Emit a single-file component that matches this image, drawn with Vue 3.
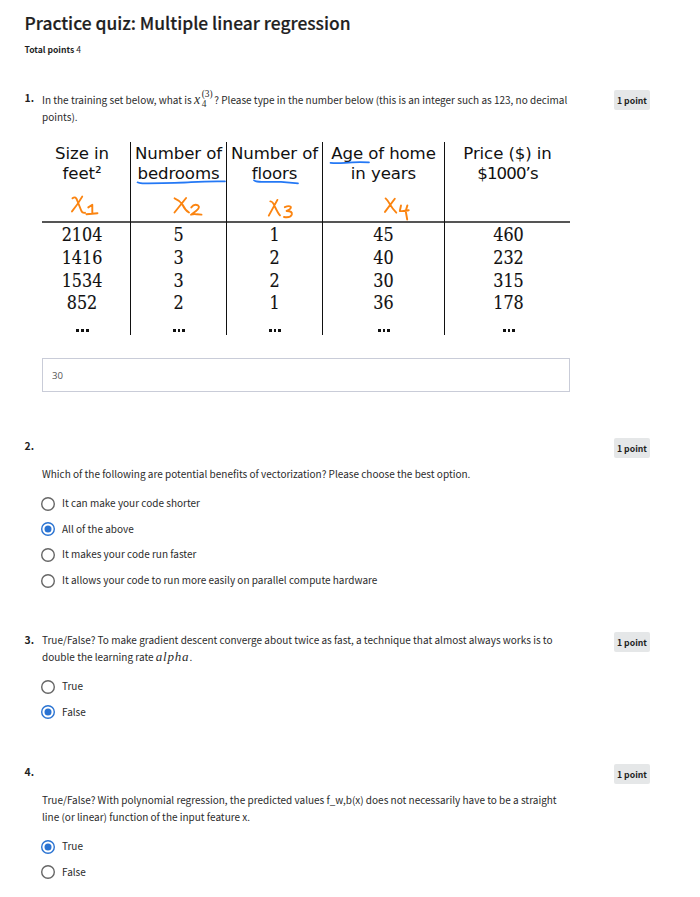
<script setup>
const columns = [
  { head: ['Size in', 'feet²'], rows: ['2104', '1416', '1534', '852'], w: 89 },
  { head: ['Number of', 'bedrooms'], rows: ['5', '3', '3', '2'], w: 96 },
  { head: ['Number of', 'floors'], rows: ['1', '2', '2', '1'], w: 96 },
  { head: ['Age of home', 'in years'], rows: ['45', '40', '30', '36'], w: 122 },
  { head: ['Price ($) in', "$1000’s"], rows: ['460', '232', '315', '178'], w: 125 },
]
const choices = [
  {
    id: 2,
    lines: ['Which of the following are potential benefits of vectorization? Please choose the best option.'],
    options: [
      'It can make your code shorter',
      'All of the above',
      'It makes your code run faster',
      'It allows your code to run more easily on parallel compute hardware',
    ],
    selected: 1,
  },
  {
    id: 3,
    lines: [
      'True/False? To make gradient descent converge about twice as fast, a technique that almost always works is to',
      'double the learning rate ',
    ],
    math: 'alpha',
    options: ['True', 'False'],
    selected: 1,
  },
  {
    id: 4,
    lines: [
      'True/False? With polynomial regression, the predicted values f_w,b(x) does not necessarily have to be a straight',
      'line (or linear) function of the input feature x.',
    ],
    options: ['True', 'False'],
    selected: 0,
  },
]
</script>

<template>
  <main class="page">
    <h1>Practice quiz: Multiple linear regression</h1>
    <p class="total"><b>Total points</b> 4</p>

    <section class="question q1">
      <div class="num">1.</div>
      <div class="body">
        <p class="prompt">
          <span class="line">In the training set below, what is <span class="math x">x<span class="scripts"><span>(3)</span><span>4</span></span></span>? Please type in the number below (this is an integer such as 123, no decimal</span>
          <span class="line">points).</span>
        </p>
        <div class="figure">
          <div v-for="(c, i) in columns" :key="i" class="col" :class="'c' + i" :style="{ width: c.w + 'px' }">
            <div class="head">
              <span v-for="h in c.head" :key="h" :class="{ tight: h.startsWith('$') }">{{ h }}</span>
            </div>
            <div v-for="r in c.rows" :key="r" class="cell">{{ r }}</div>
            <div class="dots"><i></i><i></i><i></i></div>
          </div>
          <svg class="ink" viewBox="42 142 528 194" width="528" height="194" fill="none" stroke-linecap="round" stroke-linejoin="round">
            <g stroke="#2478f5" stroke-width="1.7">
              <path d="M137.5 182.3Q140 183.7 148 183.4Q180 183 191 182.2Q210 181 225 181.4" />
              <path d="M254 180.3Q255 181.8 262 181.8L281 181.9Q289 182.6 298 183.4" />
              <path d="M330.5 162.9Q337 163.3 345 162.8Q357 161.8 369 162.4" />
            </g>
            <g stroke="#fb8410" stroke-width="1.9">
              <path d="M72.5 198.3Q76 195.5 77.4 201L81 210Q82 213.2 85 212.8M82.2 196.6Q78 204 72 211.4M88.3 207.4L92.3 204.8V213.6M86.5 214.2L97.5 213.2" />
              <path d="M174.6 198.3Q179 200 182.4 204.5Q185 210 189 212.5M186.1 198L174.5 212.5M191.3 207.4Q194.2 203.5 198 205.4Q200.6 207.3 196 210.9L191 214.7Q194 213.6 196.8 214.3L201.5 214.6" />
              <path d="M270.3 201.4Q272.5 200.9 275 206.9Q278 213.3 280 215.4M277.4 199.9L268.8 215.6M284.8 207.2Q289 205.3 290.8 206.9Q291.5 209 286.6 211Q292.7 211 291.8 214.6Q290 218.2 284 217" />
              <path d="M385.6 198.4Q388 200.5 390 204.4Q392.6 209 396.3 212.7M394.8 198.8L385 211.9M401 205.5L399.8 211Q403 211.5 408.7 210.3M407.4 205.4L405.7 211L407.2 219.5" />
            </g>
          </svg>
        </div>
        <input class="answer" type="text" value="30" />
      </div>
      <span class="badge">1 point</span>
    </section>

    <section v-for="q in choices" :key="q.id" class="question" :class="'q' + q.id">
      <div class="num">{{ q.id }}.</div>
      <div class="body">
        <p class="prompt">
          <span v-for="(l, i) in q.lines" :key="i" class="line">{{ l }}<template v-if="q.math && i === q.lines.length - 1"><span class="math word">{{ q.math }}</span>.</template></span>
        </p>
        <div class="options">
          <label v-for="(o, i) in q.options" :key="o" class="option">
            <svg width="14" height="14" viewBox="0 0 14 14">
              <circle cx="7" cy="7" r="6.3" fill="#fff" :stroke="q.selected === i ? '#2a73d2' : '#666'" stroke-width="1.4" />
              <circle v-if="q.selected === i" cx="7" cy="7" r="3.5" fill="#2a73d2" />
            </svg>
            <span>{{ o }}</span>
          </label>
        </div>
      </div>
      <span class="badge">1 point</span>
    </section>
  </main>
</template>

<style>
body {
  background: #fff;
}
</style>

<style scoped>
.page {
  box-sizing: border-box;
  width: 700px;
  height: 897px;
  overflow: hidden;
  padding: 9px 50px 0 24.5px;
  font-family: "Noto Sans CJK SC", sans-serif;
  font-size: 10px;
  color: #2b2b2b;
}
h1 {
  margin: 0;
  font-size: 17.42px;
  font-weight: 500;
  line-height: 28px;
  color: #1f1f1f;
  white-space: nowrap;
  -webkit-text-stroke: 0.2px #1f1f1f;
}
.total {
  margin: 4px 0 0;
  font-size: 8.6px;
  line-height: 16px;
}
.total b {
  color: #1f1f1f;
}
.question {
  display: grid;
  grid-template-columns: 17.5px 528px 1fr;
  align-items: start;
}
.badge {
  justify-self: end;
  width: 36px;
  height: 20px;
  border-radius: 2px;
  background: #e5e7e8;
  color: #1f1f1f;
  font-size: 8.7px;
  font-weight: 700;
  line-height: 21px;
  text-align: center;
}
.q1 { margin-top: 33px; height: 348px; }
.q2 { height: 194px; }
.q3 { height: 132px; }
.num {
  margin-top: -1px;
  color: #1f1f1f;
  font-size: 10.4px;
  font-weight: 700;
  line-height: 17px;
}
.prompt {
  margin: 1px 0 0;
}
.q2 .prompt, .q4 .prompt {
  margin-top: 27px;
}
.q3 .prompt {
  margin-top: -1px;
}
.line {
  display: block;
  height: 17px;
  line-height: 17px;
  white-space: nowrap;
}
.math {
  font-family: "Liberation Serif", serif;
  font-style: italic;
  line-height: 1;
}
.word {
  font-size: 13px;
  letter-spacing: 0.8px;
}
.x {
  display: inline-flex;
  align-items: baseline;
  font-size: 14px;
}
.scripts {
  display: inline-flex;
  flex-direction: column;
  width: 12.5px;
  margin: -12px 0 -8px 1.5px;
  font-size: 9.4px;
  font-style: normal;
  line-height: 10px;
  transform: translateY(-7px);
}
.figure {
  position: relative;
  display: flex;
  height: 194px;
  margin-top: 17px;
  color: #111;
}
.col {
  box-sizing: border-box;
  height: 193px;
  border-right: 1px solid #111;
  text-align: center;
}
.c4 {
  border-right: 0;
}
.head {
  box-sizing: border-box;
  height: 81px;
  padding-top: 2px;
  border-bottom: 2px solid #555;
  font-family: "DejaVu Sans", sans-serif;
  font-size: 16.6px;
  letter-spacing: -0.1px;
  line-height: 19.5px;
}
.c0 .head span, .c0 .cell, .c0 .dots {
  padding-right: 8px;
}
.head span {
  display: block;
  white-space: nowrap;
}
.head .tight {
  letter-spacing: -0.9px;
}
.cell {
  height: 22.8px;
  font-family: "DejaVu Serif Condensed", "DejaVu Serif", serif;
  font-stretch: condensed;
  font-size: 17.8px;
  line-height: 24px;
  -webkit-text-stroke: 0.15px #111;
}
.c4 .cell, .c4 .dots {
  padding-left: 2px;
}
.dots {
  display: flex;
  justify-content: center;
  gap: 2px;
  padding-top: 14.8px;
  margin-left: 1px;
}
.dots i {
  width: 2.7px;
  height: 2.7px;
  background: #111;
}
.ink {
  position: absolute;
  inset: 0;
}
.answer {
  display: block;
  box-sizing: border-box;
  width: 528px;
  height: 34px;
  margin: 22px 0 0;
  padding: 0 9px;
  border: 1px solid #c9ccd8;
  border-radius: 0;
  outline: none;
  background: #fff;
  color: #555;
  font: 9.6px "Open Sans", sans-serif;
}
.options {
  display: grid;
  grid-auto-rows: 25.6px;
  margin: 9px 0 0 -1px;
}
.option {
  display: flex;
  align-items: center;
  gap: 7px;
}
.option svg {
  display: block;
}
.option span {
  line-height: 17px;
  margin-top: -2px;
}
</style>
